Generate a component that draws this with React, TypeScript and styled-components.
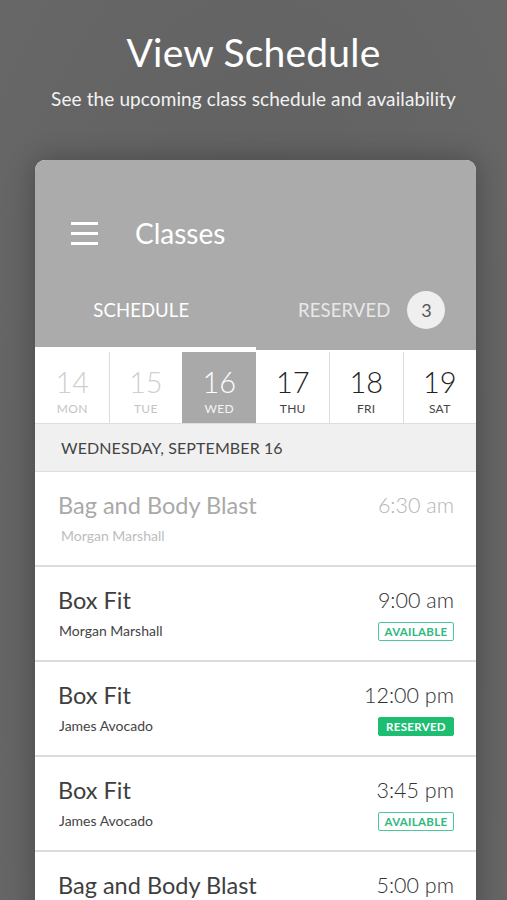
import React from "react";
import styled, { createGlobalStyle } from "styled-components";

const Global = createGlobalStyle`
  html, body { margin: 0; padding: 0; background: #666666; }
  body { font-family: Lato, "Open Sans", sans-serif; overflow: hidden; }
  * { box-sizing: border-box; }
`;

const Page = styled.div`
  width: 507px;
  height: 900px;
  overflow: hidden;
  background: radial-gradient(ellipse at 50% 60%, #5a5a5a 0%, #636363 55%, #676767 100%);
  display: flex;
  flex-direction: column;
`;

const Hero = styled.div`
  display: flex;
  flex-direction: column;
  align-items: center;
  padding-top: 29px;
  color: #ffffff;
  flex-shrink: 0;
`;

const Title = styled.h1`
  margin: 0;
  font-size: 39px;
  line-height: 46px;
  font-weight: 400;
  letter-spacing: 0.2px;
`;

const Subtitle = styled.p`
  margin: 12px 0 0;
  font-size: 19px;
  line-height: 24px;
  color: #f2f2f2;
  letter-spacing: 0.1px;
`;

const Card = styled.div`
  margin: 49px 0 0 35px;
  width: 441px;
  flex: 1 0 auto;
  background: #ffffff;
  border-radius: 10px 10px 0 0;
  overflow: hidden;
  box-shadow: 0 0 28px rgba(0, 0, 0, 0.28);
  display: flex;
  flex-direction: column;
  & > * {
    flex-shrink: 0;
  }
`;

const AppBar = styled.div`
  background: #ababab;
  display: flex;
  flex-direction: column;
`;

const Toolbar = styled.div`
  display: flex;
  align-items: center;
  height: 38px;
  margin-top: 54px;
  padding-left: 36px;
  gap: 37px;
`;

const Burger = styled.div`
  width: 27px;
  display: flex;
  flex-direction: column;
  gap: 7px;
  span {
    display: block;
    height: 3px;
    background: #ffffff;
  }
`;

const BarTitle = styled.div`
  color: #ffffff;
  font-size: 28px;
  line-height: 38px;
`;

const Tabs = styled.div`
  display: flex;
  margin-top: 40px;
`;

const Tab = styled.div<{ $active?: boolean }>`
  flex: 1;
  display: flex;
  flex-direction: column;
  align-items: center;
  color: ${(p) => (p.$active ? "#ffffff" : "#e8e8e8")};
  font-size: 18.5px;
  font-weight: 400;
  letter-spacing: 0.1px;
  &::after {
    content: "";
    align-self: stretch;
    height: 3px;
    margin-top: 19px;
    background: ${(p) => (p.$active ? "#ffffff" : "transparent")};
  }
`;

const TabLabel = styled.div<{ $shift?: boolean }>`
  height: 36px;
  display: flex;
  align-items: center;
  gap: 17px;
  padding-left: ${(p) => (p.$shift ? "12px" : "0")};
  margin-right: ${(p) => (p.$shift ? "0" : "8px")};
`;

const CountBadge = styled.span`
  width: 38px;
  height: 38px;
  border-radius: 50%;
  background: #efefef;
  color: #555555;
  font-size: 18px;
  font-weight: 400;
  display: flex;
  align-items: center;
  justify-content: center;
`;

const DayStrip = styled.div`
  display: grid;
  grid-template-columns: repeat(6, 1fr);
  height: 73px;
  background: #ffffff;
`;

type DayState = "past" | "selected" | "future";

const DayCell = styled.div<{ $state: DayState; $divider?: boolean }>`
  display: flex;
  flex-direction: column;
  align-items: center;
  padding-top: 14px;
  margin-top: 2px;
  background: ${(p) => (p.$state === "selected" ? "#a9a9a9" : "#ffffff")};
  border-left: 1.5px solid ${(p) => (p.$divider ? "#dcdcdc" : "transparent")};
  color: ${(p) =>
    p.$state === "past" ? "#cfcfcf" : p.$state === "selected" ? "#ffffff" : "#222222"};
`;

const DayNum = styled.div`
  font-size: 29px;
  line-height: 32px;
  font-weight: 300;
`;

const DayName = styled.div<{ $state: DayState }>`
  font-size: 12px;
  line-height: 14px;
  margin-top: 4px;
  letter-spacing: 0.3px;
  color: ${(p) =>
    p.$state === "past" ? "#c4c4c4" : p.$state === "selected" ? "#f4f4f4" : "#444444"};
`;

const DateHeader = styled.div`
  height: 49px;
  background: #f0f0f0;
  border-top: 1.5px solid #dedede;
  border-bottom: 1.5px solid #dedede;
  display: flex;
  align-items: center;
  padding-left: 26px;
  color: #444444;
  font-size: 16px;
  letter-spacing: 0.1px;
`;

const Row = styled.div`
  height: 95px;
  border-bottom: 2.5px solid #dcdcdc;
  display: flex;
  justify-content: space-between;
  padding: 18px 22px 0 23px;
`;

const RowLeft = styled.div`
  display: flex;
  flex-direction: column;
`;

const ClassName = styled.div<{ $faded?: boolean }>`
  font-size: 23.5px;
  line-height: 30px;
  color: ${(p) => (p.$faded ? "#a9a9a9" : "#3e3e3e")};
`;

const Instructor = styled.div<{ $faded?: boolean }>`
  font-size: 14px;
  line-height: 18px;
  margin-top: 7px;
  padding-left: ${(p) => (p.$faded ? "3px" : "1px")};
  color: ${(p) => (p.$faded ? "#bdbdbd" : "#444444")};
`;

const RowRight = styled.div`
  display: flex;
  flex-direction: column;
  align-items: flex-end;
`;

const Time = styled.div<{ $faded?: boolean }>`
  font-size: 21.5px;
  line-height: 30px;
  font-weight: 300;
  color: ${(p) => (p.$faded ? "#b5b5b5" : "#333333")};
`;

const Status = styled.div<{ $kind: "available" | "reserved" }>`
  margin-top: 7px;
  width: 76px;
  height: 19px;
  border-radius: 2px;
  display: flex;
  align-items: center;
  justify-content: center;
  font-size: 11.5px;
  font-weight: 700;
  letter-spacing: 0.3px;
  border: 1.5px solid ${(p) => (p.$kind === "reserved" ? "#1dbd72" : "#4cc896")};
  background: ${(p) => (p.$kind === "reserved" ? "#1dbd72" : "#ffffff")};
  color: ${(p) => (p.$kind === "reserved" ? "#ffffff" : "#2fb980")};
`;

const days: { n: string; d: string; s: DayState; div: boolean }[] = [
  { n: "14", d: "MON", s: "past", div: false },
  { n: "15", d: "TUE", s: "past", div: true },
  { n: "16", d: "WED", s: "selected", div: false },
  { n: "17", d: "THU", s: "future", div: false },
  { n: "18", d: "FRI", s: "future", div: true },
  { n: "19", d: "SAT", s: "future", div: true },
];

type Cls = { name: string; who: string; time: string; faded?: boolean; status?: "available" | "reserved" };
const classes: Cls[] = [
  { name: "Bag and Body Blast", who: "Morgan Marshall", time: "6:30 am", faded: true },
  { name: "Box Fit", who: "Morgan Marshall", time: "9:00 am", status: "available" },
  { name: "Box Fit", who: "James Avocado", time: "12:00 pm", status: "reserved" },
  { name: "Box Fit", who: "James Avocado", time: "3:45 pm", status: "available" },
  { name: "Bag and Body Blast", who: "James Avocado", time: "5:00 pm", status: "available" },
];

export default function App() {
  return (
    <>
      <Global />
      <Page>
        <Hero>
          <Title>View Schedule</Title>
          <Subtitle>See the upcoming class schedule and availability</Subtitle>
        </Hero>
        <Card>
          <AppBar>
            <Toolbar>
              <Burger>
                <span />
                <span />
                <span />
              </Burger>
              <BarTitle>Classes</BarTitle>
            </Toolbar>
            <Tabs>
              <Tab $active>
                <TabLabel>SCHEDULE</TabLabel>
              </Tab>
              <Tab>
                <TabLabel $shift>
                  RESERVED
                  <CountBadge>3</CountBadge>
                </TabLabel>
              </Tab>
            </Tabs>
          </AppBar>
          <DayStrip>
            {days.map((d) => (
              <DayCell key={d.n} $state={d.s} $divider={d.div}>
                <DayNum>{d.n}</DayNum>
                <DayName $state={d.s}>{d.d}</DayName>
              </DayCell>
            ))}
          </DayStrip>
          <DateHeader>WEDNESDAY, SEPTEMBER 16</DateHeader>
          {classes.map((c, i) => (
            <Row key={i}>
              <RowLeft>
                <ClassName $faded={c.faded}>{c.name}</ClassName>
                <Instructor $faded={c.faded}>{c.who}</Instructor>
              </RowLeft>
              <RowRight>
                <Time $faded={c.faded}>{c.time}</Time>
                {c.status && (
                  <Status $kind={c.status}>{c.status === "reserved" ? "RESERVED" : "AVAILABLE"}</Status>
                )}
              </RowRight>
            </Row>
          ))}
        </Card>
      </Page>
    </>
  );
}
